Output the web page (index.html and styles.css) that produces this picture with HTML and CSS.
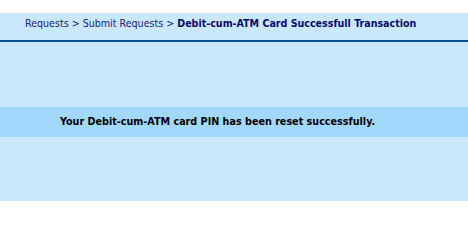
FILE: index.html
```html
<!DOCTYPE html>
<html>
<head>
<meta charset="utf-8">
<link rel="stylesheet" href="styles.css">
</head>
<body>
<div class="page">
  <div class="crumbs">
    <span class="crumb">Requests</span><span class="sep"> &gt; </span><span class="crumb">Submit Requests</span><span class="sep"> &gt; </span><span class="current">Debit-cum-ATM Card Successfull Transaction</span>
  </div>
  <div class="content">
    <div class="message">Your Debit-cum-ATM card PIN has been reset successfully.</div>
  </div>
</div>
</body>
</html>
```
FILE: styles.css
```css
html, body {
  margin: 0;
  padding: 0;
  background: #ffffff;
}
body {
  padding-top: 13px;
  font-family: "DejaVu Sans Condensed", "DejaVu Sans", Verdana, sans-serif;
  font-size: 11px;
}
.page {
  background: #c9e8fe;
  height: 188px;
}
.crumbs {
  height: 29px;
  box-sizing: border-box;
  padding: 3px 0 0 25px;
  font-size: 10.6px;
  line-height: 14px;
  color: #22226e;
  border-bottom: 2px solid #0d4f98;
  white-space: nowrap;
}
.current {
  font-weight: bold;
  color: #0b0b66;
}
.content {
  padding-top: 65px;
}
.message {
  background: #a1d8fb;
  height: 30px;
  line-height: 30px;
  padding-left: 60px;
  font-size: 10.7px;
  font-weight: bold;
  color: #000000;
  white-space: nowrap;
}
```
